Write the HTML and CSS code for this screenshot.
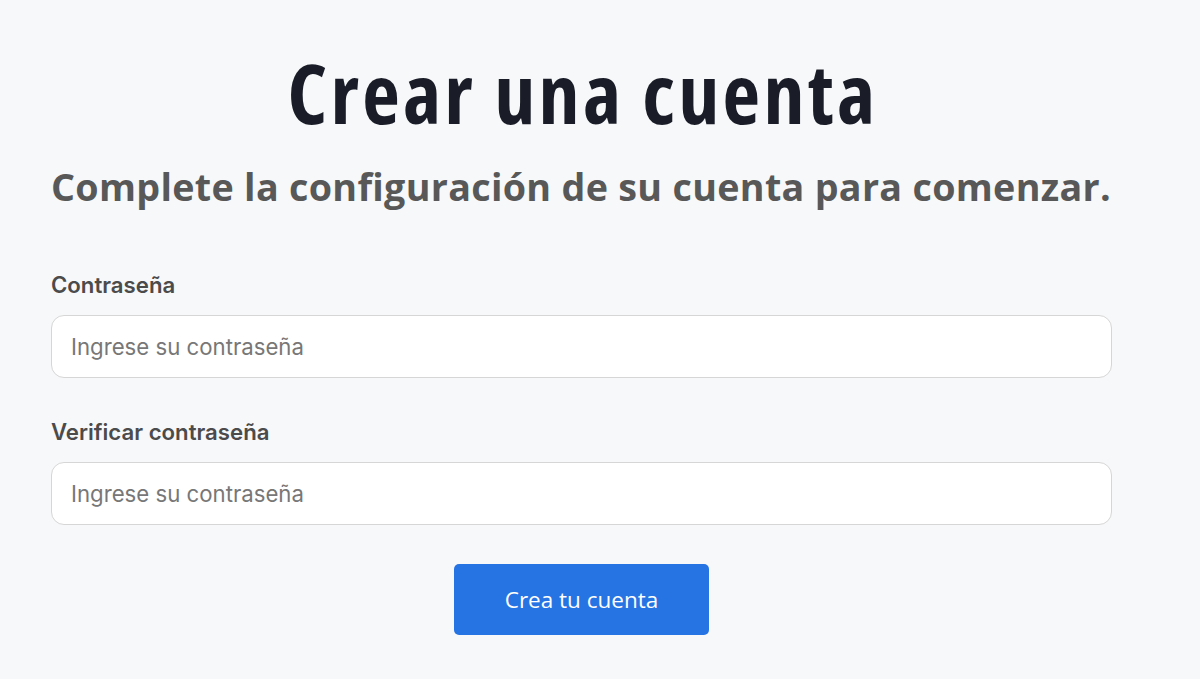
FILE: index.html
```html
<!DOCTYPE html>
<html lang="es">
<head>
<meta charset="utf-8">
<title>Crear una cuenta</title>
<link rel="stylesheet" href="styles.css">
</head>
<body>
<main class="page">
  <h1 class="title">Crear una cuenta</h1>
  <p class="subtitle">Complete la configuración de su cuenta para comenzar.</p>
  <form class="form">
    <div class="field">
      <label class="label" for="pw">Contraseña</label>
      <input class="input" id="pw" type="password" placeholder="Ingrese su contraseña">
    </div>
    <div class="field">
      <label class="label" for="pw2">Verificar contraseña</label>
      <input class="input" id="pw2" type="password" placeholder="Ingrese su contraseña">
    </div>
    <div class="actions">
      <button class="button" type="button">Crea tu cuenta</button>
    </div>
  </form>
</main>
</body>
</html>
```
FILE: styles.css
```css
html, body {
  margin: 0;
  padding: 0;
  background: #f7f8fa;
}
.page {
  width: 1061px;
  margin-left: 51px;
  padding-top: 42px;
  display: flex;
  flex-direction: column;
}
.title {
  margin: 0;
  padding-left: 3px;
  text-align: center;
  font-family: "Open Sans", sans-serif;
  font-weight: 700;
  font-stretch: 75%;
  font-size: 82px;
  letter-spacing: 3.3px;
  line-height: 100px;
  color: #1a1d27;
}
.subtitle {
  margin: 19px 0 0;
  font-family: "Open Sans", sans-serif;
  font-weight: 700;
  font-size: 37.7px;
  line-height: 52px;
  letter-spacing: 0.3px;
  white-space: nowrap;
  color: #585858;
}
.form {
  margin-top: 59px;
  display: flex;
  flex-direction: column;
}
.field {
  display: flex;
  flex-direction: column;
  margin-bottom: 41px;
}
.label {
  font-family: Inter, sans-serif;
  font-weight: 600;
  font-size: 22.2px;
  line-height: 26px;
  color: #4b4b4b;
  margin-bottom: 17px;
}
.input {
  box-sizing: border-box;
  height: 63px;
  padding: 0 19px;
  border: 1.5px solid #d6d6d6;
  border-radius: 13px;
  background: #ffffff;
  font-family: Inter, sans-serif;
  font-size: 22.2px;
  color: #333;
  outline: none;
}
.input::placeholder {
  color: #777777;
}
.actions {
  display: flex;
  justify-content: center;
  margin-top: -2px;
}
.button {
  width: 255px;
  height: 71px;
  border: none;
  border-radius: 5px;
  background: #2673e4;
  color: #ffffff;
  font-family: "Open Sans", sans-serif;
  font-size: 22.5px;
  font-weight: 400;
  cursor: pointer;
}
```
